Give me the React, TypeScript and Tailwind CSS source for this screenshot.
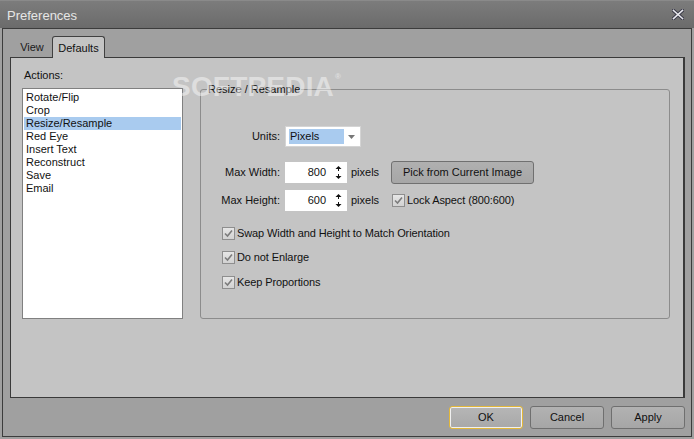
import React from "react";

const items = ["Rotate/Flip", "Crop", "Resize/Resample", "Red Eye", "Insert Text", "Reconstruct", "Save", "Email"];

function Check({ label }: { label: string }) {
  return (
    <div className="flex items-center h-[13px]">
      <div className="w-[13px] h-[13px] border border-[#8e8e8e] bg-linear-to-b from-[#e6e6e6] to-[#d2d2d2] flex items-center justify-center">
        <svg width="9" height="9" viewBox="0 0 9 9">
          <path d="M1 4.5 L3.5 7 L8 1.5" fill="none" stroke="#7c7c7c" strokeWidth="1.6" />
        </svg>
      </div>
      <span className="ml-[2px] leading-[13px] text-[#111] tracking-[-0.1px]">{label}</span>
    </div>
  );
}

function Spinner() {
  return (
    <div className="w-[17px] h-[21px] bg-white flex items-center justify-center">
      <svg width="7" height="15" viewBox="0 0 7 15">
        <path d="M3.5 1 L0.5 4 L6.5 4 Z" fill="#111" />
        <rect x="3" y="4" width="1" height="2" fill="#111" />
        <path d="M3.5 14 L0.5 11 L6.5 11 Z" fill="#111" />
        <rect x="3" y="9" width="1" height="2" fill="#111" />
      </svg>
    </div>
  );
}

function Btn({ children, ok }: { children: React.ReactNode; ok?: boolean }) {
  return (
    <div
      className={
        "w-[74px] h-[23px] rounded-[3px] flex items-center justify-center text-[#111] " +
        (ok
          ? "border border-[#e2b73a] bg-linear-to-b from-[#b6b6b6] to-[#a8a8a8] shadow-[inset_0_0_0_1px_#f0f0f0]"
          : "border border-[#6f6f6f] bg-linear-to-b from-[#b2b2b2] to-[#a6a6a6]")
      }
    >
      {children}
    </div>
  );
}

export default function App() {
  return (
    <div className="w-[694px] h-[439px] bg-[#a0a0a0] flex flex-col overflow-hidden text-[11px] font-['Liberation_Sans',Arial,sans-serif] text-[#111]">
      {/* Title bar */}
      <div className="h-[28px] shrink-0 flex items-center justify-between pl-[7px] pr-[10px] pt-[3px] bg-linear-to-b from-[#7c7c7c] to-[#6b6b6b] border-t border-[#8a8a8a]">
        <span className="text-[13px] text-[#e6e6e6]">Preferences</span>
        <svg width="12" height="11" viewBox="0 0 12 11" className="-mt-[3px]">
          <path d="M1.5 1.5 L10.5 9.5 M10.5 1.5 L1.5 9.5" stroke="#3a3a48" strokeWidth="3.6" strokeLinecap="square" />
          <path d="M1.5 1.5 L10.5 9.5 M10.5 1.5 L1.5 9.5" stroke="#e8e8ee" strokeWidth="1.6" strokeLinecap="square" />
        </svg>
      </div>

      {/* Frame */}
      <div className="h-[409px] mx-[2px] border border-[#3c3c3c] flex flex-col">
        {/* Tabs */}
        <div className="pt-[6px] pl-[7px] flex items-end h-[28px] shrink-0">
          <div className="w-[42px] h-[19px] flex items-center justify-center text-[#1a1a1a] pb-[1px] pl-[2px]">View</div>
          <div className="relative z-10 w-[53px] h-[22px] -mb-[1px] bg-[#c4c4c4] border border-b-0 border-[#404040] rounded-t-[3px] flex items-start justify-center pt-[3px] text-[#111]">
            Defaults
          </div>
        </div>

        {/* Panel */}
        <div className="relative ml-[7px] mr-[6px] h-[341px] shrink-0 bg-[#c4c4c4] border border-[#3a3a3a] border-r-2 flex items-start pt-[11px]">
          {/* Left column */}
          <div className="ml-[11px] w-[161px] flex flex-col">
            <div className="pl-[2px] h-[13px] leading-[13px]">Actions:</div>
            <div className="mt-[6px] h-[231px] bg-white border border-[#808080] pt-[2px] px-[1px]">
              {items.map((t) => (
                <div
                  key={t}
                  className={"h-[13px] leading-[13px] pl-[2px] text-[#111] " + (t === "Resize/Resample" ? "bg-[#a9cbef]" : "")}
                >
                  {t}
                </div>
              ))}
            </div>
          </div>

          {/* Group box */}
          <div className="relative ml-[17px] mt-[20px] w-[470px] h-[230px] border border-[#8c8c8c] rounded-[3px] pt-[36px] flex flex-col">
            <div className="absolute -top-[7px] left-[6px] px-[1px] bg-[#c4c4c4] leading-[13px] text-[#111]">Resize / Resample</div>

            {/* Units */}
            <div className="flex items-center h-[21px]">
              <div className="w-[79px] text-right">Units:</div>
              <div className="ml-[5px] w-[76px] h-[21px] bg-white flex items-center pl-[3px] pr-[5px] border border-[#d4d4d4]">
                <div className="w-[55px] h-[15px] bg-[#a9cbef] leading-[15px] pl-[1px]">Pixels</div>
                <svg className="ml-auto" width="7" height="4" viewBox="0 0 7 4">
                  <path d="M0 0 L7 0 L3.5 4 Z" fill="#777" />
                </svg>
              </div>
            </div>

            {/* Max width */}
            <div className="mt-[15px] flex items-center h-[21px]">
              <div className="w-[79px] text-right">Max Width:</div>
              <div className="ml-[5px] w-[45px] h-[21px] bg-white text-right pr-[4px] leading-[21px]">800</div>
              <Spinner />
              <div className="w-[44px] pl-[4px]">pixels</div>
              <div className="w-[143px] h-[23px] rounded-[3px] border border-[#707070] bg-linear-to-b from-[#b0b0b0] to-[#a6a6a6] flex items-center justify-center">
                Pick from Current Image
              </div>
            </div>

            {/* Max height */}
            <div className="mt-[7px] flex items-center h-[21px]">
              <div className="w-[79px] text-right">Max Height:</div>
              <div className="ml-[5px] w-[45px] h-[21px] bg-white text-right pr-[4px] leading-[21px]">600</div>
              <Spinner />
              <div className="w-[45px] pl-[4px]">pixels</div>
              <Check label="Lock Aspect (800:600)" />
            </div>

            {/* Checkboxes */}
            <div className="pl-[21px] mt-[16px] flex flex-col gap-[11px]">
              <Check label="Swap Width and Height to Match Orientation" />
              <Check label="Do not Enlarge" />
              <div className="mt-[1px]">
                <Check label="Keep Proportions" />
              </div>
            </div>
          </div>

          {/* watermark overlay */}
          <div className="absolute z-20 left-[161px] top-[15px] text-[28px] font-bold tracking-[0.2px] text-white opacity-45 leading-none pointer-events-none select-none">
            SOFTPEDIA<span className="text-[8px] align-top ml-[1px]">®</span>
          </div>
        </div>

        {/* Buttons */}
        <div className="mt-[8px] pr-[6px] flex justify-end gap-[7px]">
          <Btn ok>OK</Btn>
          <Btn>Cancel</Btn>
          <Btn>Apply</Btn>
        </div>
      </div>
    </div>
  );
}
